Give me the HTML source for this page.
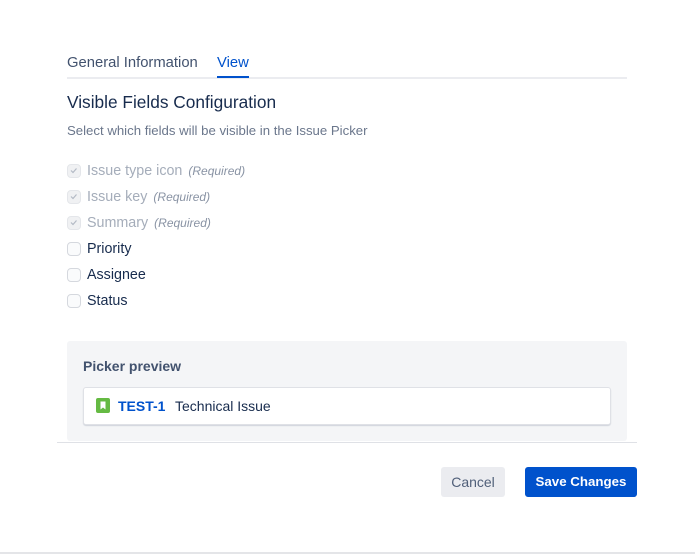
<!DOCTYPE html>
<html><head><meta charset="utf-8"><style>
*{margin:0;padding:0;box-sizing:border-box}
body{width:695px;height:555px;background:#fff;font-family:"Liberation Sans",sans-serif;position:relative;overflow:hidden;color:#172b4d}
.a{position:absolute;white-space:nowrap}
.cb{position:absolute;left:67px;width:14px;height:14px;border:1.5px solid #d5d8de;border-radius:4px;background:#fafbfc}
.cb.d{background:#f0f1f3;border-color:#e4e6ea}
.lbl{position:absolute;left:87px;font-size:14.3px}
.g{color:#a5adba}
.req{font-style:italic;font-size:12px;color:#8993a4;margin-left:6px}
</style></head><body>
<div class="a" style="left:67px;top:55px;font-size:14.8px;color:#42526e">General Information</div>
<div class="a" style="left:217px;top:55px;font-size:14.8px;color:#0052cc">View</div>
<div class="a" style="left:67px;top:77px;width:560px;height:2px;background:#ebecf0"></div>
<div class="a" style="left:217px;top:76px;width:32px;height:2px;background:#0052cc"></div>
<div class="a" style="left:67px;top:92px;font-size:17.3px;color:#172b4d">Visible Fields Configuration</div>
<div class="a" style="left:67px;top:123px;font-size:13.2px;color:#6b778c">Select which fields will be visible in the Issue Picker</div>

<div class="cb d" style="top:164px"><svg width="11" height="11" viewBox="0 0 11 11" style="position:absolute;left:0;top:0"><path d="M3 5.5l2 2 3.5-4" stroke="#b3bac5" stroke-width="1.2" fill="none"/></svg></div>
<div class="lbl g" style="top:163px">Issue type icon<span class="req">(Required)</span></div>
<div class="cb d" style="top:190px"><svg width="11" height="11" viewBox="0 0 11 11" style="position:absolute;left:0;top:0"><path d="M3 5.5l2 2 3.5-4" stroke="#b3bac5" stroke-width="1.2" fill="none"/></svg></div>
<div class="lbl g" style="top:189px">Issue key<span class="req">(Required)</span></div>
<div class="cb d" style="top:216px"><svg width="11" height="11" viewBox="0 0 11 11" style="position:absolute;left:0;top:0"><path d="M3 5.5l2 2 3.5-4" stroke="#b3bac5" stroke-width="1.2" fill="none"/></svg></div>
<div class="lbl g" style="top:215px">Summary<span class="req">(Required)</span></div>
<div class="cb" style="top:242px"></div><div class="lbl" style="top:241px">Priority</div>
<div class="cb" style="top:268px"></div><div class="lbl" style="top:267px">Assignee</div>
<div class="cb" style="top:294px"></div><div class="lbl" style="top:293px">Status</div>

<div class="a" style="left:67px;top:341px;width:560px;height:100px;background:#f4f5f7;border-radius:3px"></div>
<div class="a" style="left:83px;top:358px;font-size:14px;font-weight:bold;color:#42526e">Picker preview</div>
<div class="a" style="left:83px;top:387px;width:528px;height:38px;background:#fff;border:1px solid #dfe1e6;border-radius:3px;box-shadow:0 1px 1px rgba(9,30,66,.15)"></div>
<svg class="a" style="left:96px;top:398px" width="14" height="15" viewBox="0 0 14 15"><rect width="14" height="15" rx="2" fill="#65ba43"/><path d="M4.5 3.5h5v8l-2.5-2-2.5 2z" fill="#fff"/></svg>
<div class="a" style="left:118px;top:398px;font-size:14px;font-weight:bold;color:#0052cc">TEST-1</div>
<div class="a" style="left:175px;top:398px;font-size:14px;color:#172b4d">Technical Issue</div>

<div class="a" style="left:57px;top:442px;width:580px;height:1px;background:#dfe1e6"></div>
<div class="a" style="left:441px;top:467px;width:64px;height:30px;background:#ebecf0;border-radius:3px;color:#505f79;font-size:14px;text-align:center;line-height:30px">Cancel</div>
<div class="a" style="left:525px;top:467px;width:112px;height:30px;background:#0052cc;border-radius:3px;color:#fff;font-size:13.3px;font-weight:bold;text-align:center;line-height:30px">Save Changes</div>
<div class="a" style="left:0;top:552px;width:695px;height:2px;background:#e4e5e8"></div>
</body></html>
